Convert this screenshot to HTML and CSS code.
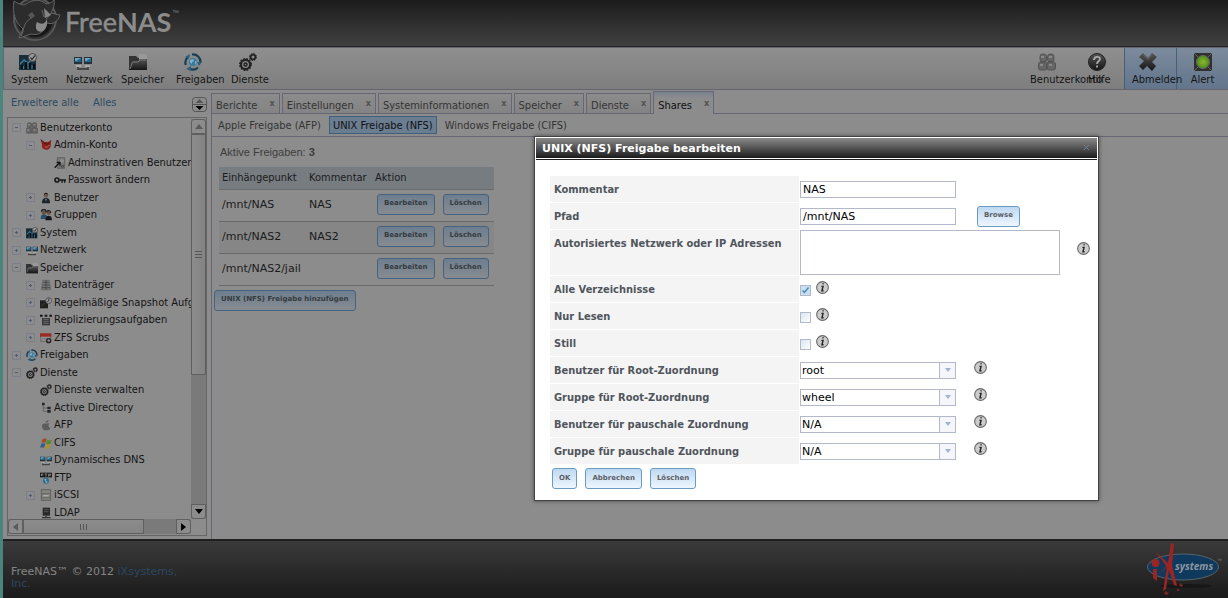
FILE: index.html
```html
<!DOCTYPE html>
<html lang="de">
<head>
<meta charset="utf-8">
<title>FreeNAS</title>
<link rel="stylesheet" href="styles.css">
</head>
<body>
<svg class="sprite" aria-hidden="true">
  <defs>
    <linearGradient id="dark" x1="0" y1="0" x2="0" y2="1"><stop offset="0" stop-color="#555"/><stop offset="1" stop-color="#151515"/></linearGradient>
    <radialGradient id="green"><stop offset="0" stop-color="#8fb52c"/><stop offset="1" stop-color="#4a8c1c"/></radialGradient>
  </defs>
  <symbol id="i-system" viewBox="0 0 18 18"><rect y="2" width="17" height="15" fill="#172f3b"/><path d="M1 10l4-4 4 3 3-3v2l-3 3-4-3-4 4z" fill="#3d7898"/><path d="M2 16v-4h2v4M6 16V9h2v7M10 16v-6h2v6M14 16v-5h2v5" fill="#080e12"/><path d="M4 16v-3h1v3M8.500 16v-5h1v5M12.500 16v-4h1v4" fill="#417d9c"/><circle cx="13.500" cy="4.500" r="4" fill="#999" stroke="#4c4c4c"/><path d="M11.500 4.500l1.500 2 3-4" fill="none" stroke="#222" stroke-width="1.200"/></symbol>
  <symbol id="i-net" viewBox="0 0 18 18"><path d="M0 4h8v7H0zM10 4h8v7h-8z" fill="#27313a"/><path d="M1 5h6v4H1zM11 5h6v4h-6z" fill="#1c6a91"/><path d="M1 5h6L2 8H1zM11 5h6l-5 3h-1z" fill="#75a3b8"/><path d="M2 12h5v2H2zM11 12h5v2h-5z" fill="#aaa"/><path d="M4 14v2h10v-2M7 16h4" fill="none" stroke="#444" stroke-width="1.800"/></symbol>
  <symbol id="i-folder" viewBox="0 0 18 18"><path d="M0 3h7l2 2h9v12H0z" fill="#333"/><path d="M10 1h6l2 2v5h-8z" fill="#999"/><path d="M0 17L3 8h6l2-2h7v11z" fill="url(#dark)"/><path d="M1 16L3.500 9H9l2-2h6" fill="none" stroke="#777"/></symbol>
  <symbol id="i-share" viewBox="0 0 18 18"><g fill="none" stroke="#173e55" stroke-width="2.200"><path d="M8 1.500a7.500 7.500 0 0 1 8.500 8"/><path d="M14 14.500a7.500 7.500 0 0 1-9 1"/><path d="M1.800 12A7.500 7.500 0 0 1 4 4"/></g><path d="M6 1L5 6 1 4zM18 9l-3 4-2-4zM7 13v5l-5-2z" fill="#2c5f7b"/><circle cx="9" cy="9" r="4" fill="#347ca0"/><path d="M6 7l3-1 1 2-2 1v2l-2-2zM11 8l2 1-2 3z" fill="#8ab2c3"/></symbol>
  <symbol id="i-gears" viewBox="0 0 18 18"><g fill="none" stroke="#222"><circle cx="6.500" cy="11.500" r="4.600" stroke-width="2.200"/><circle cx="6.500" cy="11.500" r="5.900" stroke-width="1.200" stroke-dasharray="1.700 1.390"/><circle cx="6.500" cy="11.500" r="1.500" stroke-width="1.500"/><circle cx="14" cy="4" r="2.400" stroke-width="1.800"/><circle cx="14" cy="4" r="3.500" stroke-dasharray="1.500 1.250"/></g></symbol>
  <symbol id="i-users" viewBox="0 0 18 18"><g fill="#666" stroke="#4c4c4c" stroke-width=".8"><rect x="2" y="1" width="6.500" height="8" rx="2.500"/><rect x="9.500" y="1" width="6.500" height="8" rx="2.500"/><rect x="0.500" y="9" width="8.500" height="8" rx="2"/><rect x="9" y="9" width="8.500" height="8" rx="2"/></g><path d="M3 3h3v2H3zM11 3h3v2h-3zM2 11h3v2H2zM11 11h3v2h-3z" fill="#8a8a8a"/></symbol>
  <symbol id="i-help" viewBox="0 0 18 18"><circle cx="9" cy="9" r="8.500" fill="url(#dark)" stroke="#222"/><path d="M6 7c0-4 6-4 6-1 0 2-3 2-3 5M9 12.500v2" fill="none" stroke="#aaa" stroke-width="1.800"/></symbol>
  <symbol id="i-x" viewBox="0 0 18 18"><path d="M4 0l5 5 4-5 5 4-5 5 4 4-4 5-5-5-4 4-4-4 5-5-5-4z" fill="url(#dark)"/><path d="M4 1.500l5 5 4-5" fill="none" stroke="#666"/></symbol>
  <symbol id="i-alert" viewBox="0 0 18 18"><rect width="18" height="18" fill="#303030"/><path d="M0 0l4 4M18 0l-4 4M0 18l4-4M18 18l-4-4" stroke="#666"/><circle cx="9" cy="9" r="6.500" fill="url(#green)" stroke="#656565"/></symbol>
  <symbol id="i-devil" viewBox="0 0 18 18"><path d="M1 2l5 3c2-1 4-1 6 0l5-4-1 6c1 6-3 9-7 9S2 13 3 8z" fill="#8d2018"/><path d="M1 1l5 4M6 6l4 2M11 8l3-3" stroke="#371310" stroke-width="1.500"/><path d="M7 12c3 1 5 0 7-3" fill="none" stroke="#b66" stroke-width="1.500"/></symbol>
  <symbol id="i-adminuser" viewBox="0 0 18 18"><path d="M5 1h11v16H5z" fill="#777" stroke="#555"/><circle cx="12" cy="6" r="3" fill="#8e8e8e"/><path d="M1 16l8-8M4 8h5v5" fill="none" stroke="#151515" stroke-width="2"/><path d="M10 12h5v4h-5z" fill="#555"/></symbol>
  <symbol id="i-key" viewBox="0 0 18 18"><circle cx="4.500" cy="9" r="3" fill="none" stroke="#1b1b1b" stroke-width="2.500"/><path d="M8 9h10M12 10v3M16 10v3" stroke="#1b1b1b" stroke-width="2.200"/></symbol>
  <symbol id="i-user" viewBox="0 0 18 18"><circle cx="9" cy="5" r="3.500" fill="#6b5b50"/><path d="M6 5c0-5 6-5 6 0l-1-2H8z" fill="#171717"/><path d="M3 17c0-6 2-8 6-8s6 2 6 8z" fill="#1b2027"/><path d="M8 10h2l-1 5z" fill="#aaa"/></symbol>
  <symbol id="i-group" viewBox="0 0 18 18"><circle cx="6" cy="5" r="3.500" fill="#685646"/><circle cx="13" cy="6" r="3" fill="#715545"/><path d="M2 4c1-5 7-4 7 0M10 5c1-4 6-3 6 1" stroke="#222" stroke-width="2" fill="none"/><path d="M1 15c0-5 2-7 5-7s5 2 5 7z" fill="#28506a"/><path d="M8 17c0-5 2-7 5-7s5 2 5 7z" fill="#15191d"/></symbol>
  <symbol id="i-disk" viewBox="0 0 18 18"><path d="M4 2h10l2 14H2z" fill="#777" stroke="#606060"/><path d="M5 5h8M4 9h10M3 13h12M9 2v14" stroke="#444" stroke-width="1.300"/></symbol>
  <symbol id="i-snap" viewBox="0 0 18 18"><path d="M0 5h12v12H0z" fill="#202020"/><path d="M2 14l5-5" stroke="#555"/><circle cx="13" cy="5.500" r="4.500" fill="#929292" stroke="#444"/><path d="M13 2v4l-2 1" fill="none" stroke="#222"/></symbol>
  <symbol id="i-repl" viewBox="0 0 18 18"><path d="M0 1h4v3H0zM7 1h4v3H7zM14 1h4v3h-4z" fill="#151515"/><path d="M3 6h12v11H3z" fill="#383838"/><path d="M5 8h8M5 11h8M5 14h8" stroke="#888"/></symbol>
  <symbol id="i-scrub" viewBox="0 0 18 18"><path d="M1 3h15v11H1z" fill="#929292" stroke="#555"/><path d="M0 2h17v5H0z" fill="#9e2a24"/><path d="M3 10h8" stroke="#666"/><circle cx="13" cy="13" r="3" fill="none" stroke="#222" stroke-width="2"/></symbol>
  <symbol id="i-ad" viewBox="0 0 18 18"><path d="M5 2v12h6M5 9h6" fill="none" stroke="#555"/><path d="M3 1h4v4H3zM11 7h5v4h-5zM11 12h5v4h-5z" fill="#252525"/></symbol>
  <symbol id="i-apple" viewBox="0 0 18 18"><path d="M8 6c1-3 3-4 5-4 0 2-2 4-5 4M14 7c-2-1-4 0-5 0-3-1-6 0-6 4 0 3 2 6 5 6h4c2 0 4-3 3-4-3-1-3-4-1-6" fill="#5d5d5d"/></symbol>
  <symbol id="i-win" viewBox="0 0 18 18"><path d="M4 3c2-1 4-1 6 0L8 9c-2-1-4-1-6 0z" fill="#a04c25"/><path d="M11 4c2 1 4 1 7 0l-2 6c-2 1-4 1-7 0z" fill="#5a8832"/><path d="M2 10c2-1 4-1 6 0l-2 6c-2-1-4-1-6 0z" fill="#315d91"/><path d="M9 11c2 1 4 1 7 0l-2 6c-2 1-4 1-7 0z" fill="#ac932d"/></symbol>
  <symbol id="i-ftp" viewBox="0 0 18 18"><path d="M0 1h18v7H0z" fill="#171717"/><path d="M2 6V3h3M2 4.500h3M7 3h4M9 3v4M13 7V3h3v2h-3" fill="none" stroke="#aaa"/><circle cx="9" cy="13" r="4.500" fill="#276b90"/><path d="M6 11l4-1-1 3 3 2-3 2-1-3z" fill="#8ca9b5"/></symbol>
  <symbol id="i-iscsi" viewBox="0 0 18 18"><path d="M2 1h14v16H2z" fill="#85857f" stroke="#4c4c4c"/><path d="M3 7h12M3 13h12" stroke="#555"/><path d="M5 10h8" stroke="#aaa" stroke-width="2"/></symbol>
  <symbol id="i-ldap" viewBox="0 0 18 18"><path d="M4 1h11v12H4z" fill="#292929"/><path d="M6 4h7M6 7h7" stroke="#666"/><path d="M9 13v3M3 16h13" stroke="#333" stroke-width="2"/></symbol>
  <symbol id="i-info" viewBox="0 0 12 12"><circle cx="6" cy="6" r="5.400" fill="#ccc" stroke="#666"/><path d="M6 2.500h1M5 5h1.500l-1 4H7" fill="none" stroke="#222" stroke-width="1.300"/></symbol>
</svg>

<div class="app">
  <header class="brand">
    <svg class="logo" viewBox="0 0 170 46" role="img" aria-label="FreeNAS">
      <circle cx="24" cy="19" r="21" fill="#303030" stroke="#575757" stroke-width="2"/>
      <circle cx="24" cy="19" r="18" fill="#171717"/>
      <path d="M3 1c5 3 9 5 12 3 7-5 15-5 20 0 5-1 7-2 8-5 1 6-1 10-3 14l9 2c-2 7-8 10-13 8-2 9-9 13-16 11L8 38l4-9C4 22 1 13 3 1z" fill="#2c2c2c" stroke="#666"/>
      <path d="M10 36c4-7 1-12 10-18M31 10l2 7 5-1M40 13c-2 3-2 4-5 6" fill="none" stroke="#666"/>
      <path d="M17 15l4-3 3 4-4 3z" fill="#555"/>
      <path d="M26 22c5 3 8 2 10-3 1 9-4 15-9 12-2-1-3-5-1-9z" fill="#8a8a8a"/><path d="M33 8l7 7-6 3z" fill="#858585"/>
      <text x="54" y="32" class="logo-word"><tspan>Free</tspan><tspan class="heavy">NAS</tspan></text>
      <text x="161" y="15" class="logo-tm">™</text>
    </svg>
  </header>
  <nav class="toolbar">
    <button><svg><use href="#i-system"/></svg>System</button>
    <button><svg><use href="#i-net"/></svg>Netzwerk</button>
    <button><svg><use href="#i-folder"/></svg>Speicher</button>
    <button><svg><use href="#i-share"/></svg>Freigaben</button>
    <button><svg><use href="#i-gears"/></svg>Dienste</button>
    <span class="spacer"></span>
    <button class="account"><svg><use href="#i-users"/></svg>Benutzerkonto</button>
    <button class="help"><svg><use href="#i-help"/></svg>Hilfe</button>
    <button class="hot logout"><svg><use href="#i-x"/></svg><span>Abmelden</span></button>
    <button class="hot"><svg><use href="#i-alert"/></svg>Alert</button>
  </nav>
  <div class="main">
    <aside class="side">
      <div class="side-head"><a href="#">Erweitere alle</a><a href="#">Alles</a>
        <svg class="updown" viewBox="0 0 15 15"><rect x=".5" y=".5" width="14" height="14" rx="3" fill="none" stroke="#555"/><path d="M0 7.500h15" stroke="#555"/><path d="M3.500 6L7.500 2l4 4z" fill="#555"/><path d="M3.500 9L7.500 13l4-4z" fill="#000"/></svg>
      </div>
      <div class="tree-box">
        <ul class="tree">
          <li class="l0"><i class="open"></i><svg><use href="#i-users"/></svg>Benutzerkonto</li>
          <li class="l1"><i class="open"></i><svg><use href="#i-devil"/></svg>Admin-Konto</li>
          <li class="l2"><i class="leaf"></i><svg><use href="#i-adminuser"/></svg>Adminstrativen Benutzer</li>
          <li class="l2"><i class="leaf"></i><svg><use href="#i-key"/></svg>Passwort ändern</li>
          <li class="l1"><i></i><svg><use href="#i-user"/></svg>Benutzer</li>
          <li class="l1"><i></i><svg><use href="#i-group"/></svg>Gruppen</li>
          <li class="l0"><i></i><svg><use href="#i-system"/></svg>System</li>
          <li class="l0"><i></i><svg><use href="#i-net"/></svg>Netzwerk</li>
          <li class="l0"><i class="open"></i><svg><use href="#i-folder"/></svg>Speicher</li>
          <li class="l1"><i></i><svg><use href="#i-disk"/></svg>Datenträger</li>
          <li class="l1"><i></i><svg><use href="#i-snap"/></svg>Regelmäßige Snapshot Aufgaben</li>
          <li class="l1"><i></i><svg><use href="#i-repl"/></svg>Replizierungsaufgaben</li>
          <li class="l1"><i></i><svg><use href="#i-scrub"/></svg>ZFS Scrubs</li>
          <li class="l0"><i></i><svg><use href="#i-share"/></svg>Freigaben</li>
          <li class="l0"><i class="open"></i><svg><use href="#i-gears"/></svg>Dienste</li>
          <li class="l1"><i class="leaf"></i><svg><use href="#i-gears"/></svg>Dienste verwalten</li>
          <li class="l1"><i class="leaf"></i><svg><use href="#i-ad"/></svg>Active Directory</li>
          <li class="l1"><i class="leaf"></i><svg><use href="#i-apple"/></svg>AFP</li>
          <li class="l1"><i class="leaf"></i><svg><use href="#i-win"/></svg>CIFS</li>
          <li class="l1"><i class="leaf"></i><svg><use href="#i-net"/></svg>Dynamisches DNS</li>
          <li class="l1"><i class="leaf"></i><svg><use href="#i-ftp"/></svg>FTP</li>
          <li class="l1"><i></i><svg><use href="#i-iscsi"/></svg>iSCSI</li>
          <li class="l1"><i class="leaf"></i><svg><use href="#i-ldap"/></svg>LDAP</li>
        </ul>
        <div class="vbar">
          <span class="cap up"><svg viewBox="0 0 8 5"><path d="M0 5l4-5 4 5z" fill="#5a5a5a"/></svg></span>
          <span class="thumb"><svg viewBox="0 0 7 8"><path d="M0 .5h7M0 3.500h7M0 6.500h7" stroke="#555"/></svg></span>
          <span class="track"></span>
          <span class="cap down"><svg viewBox="0 0 8 5"><path d="M0 0l4 5 4-5z" fill="#000"/></svg></span>
        </div>
        <div class="hbar">
          <span class="cap left"><svg viewBox="0 0 5 8"><path d="M5 0L0 4l5 4z" fill="#5a5a5a"/></svg></span>
          <span class="thumb"><svg viewBox="0 0 8 6"><path d="M.5 0v6M3.500 0v6M6.500 0v6" stroke="#555"/></svg></span>
          <span class="track"></span>
          <span class="cap right"><svg viewBox="0 0 5 8"><path d="M0 0l5 4-5 4z" fill="#000"/></svg></span>
        </div>
      </div>
    </aside>
    <section class="content">
      <div class="tabs">
        <button>Berichte<b>x</b></button><button>Einstellungen<b>x</b></button><button>Systeminformationen<b>x</b></button><button>Speicher<b>x</b></button><button>Dienste<b>x</b></button><button class="on">Shares<b>x</b></button>
      </div>
      <div class="subtabs"><button>Apple Freigabe (AFP)</button><button class="on">UNIX Freigabe (NFS)</button><button>Windows Freigabe (CIFS)</button></div>
      <div class="pane">
        <p class="count">Aktive Freigaben: <strong>3</strong></p>
        <table class="shares">
          <thead><tr><th class="c1">Einhängepunkt</th><th class="c2">Kommentar</th><th>Aktion</th></tr></thead>
          <tbody>
            <tr><td>/mnt/NAS</td><td>NAS</td><td><div class="acts"><button class="btn">Bearbeiten</button><button class="btn">Löschen</button></div></td></tr>
            <tr class="alt"><td>/mnt/NAS2</td><td>NAS2</td><td><div class="acts"><button class="btn">Bearbeiten</button><button class="btn">Löschen</button></div></td></tr>
            <tr><td>/mnt/NAS2/jail</td><td></td><td><div class="acts"><button class="btn">Bearbeiten</button><button class="btn">Löschen</button></div></td></tr>
          </tbody>
        </table>
        <button class="btn">UNIX (NFS) Freigabe hinzufügen</button>
      </div>
    </section>
  </div>
  <footer class="foot">
    <p>FreeNAS™ © 2012 <a href="#">iXsystems, Inc.</a></p>
    <svg class="ix" viewBox="0 0 76 54" role="img" aria-label="iXsystems">
      <ellipse cx="40" cy="43" rx="26" ry="2" fill="#171717"/>
      <ellipse cx="37" cy="24" rx="35.500" ry="13" fill="#0f3a5e" stroke="#59636b"/>
      <path d="M25 0l3 1-2 21 5 21-3-1-5-15-3 19-3 2 4-24L9 8l13 12z" fill="#9b2523"/>
      <path d="M30 12L13 31l10-9zM7 26l4 0v12l-4-3z" fill="#9b2523"/><circle cx="9.500" cy="20" r="4" fill="#9b2523"/><path d="M34 40l3 2-1 2-3-1zM19 48l4 2-2 2-3-1zM31 46h2v2h-2z" fill="#7b2523"/>
      <text x="29" y="27" class="ix-word">systems</text><text x="71" y="19" class="ix-tm">™</text>
    </svg>
  </footer>

  <form class="dialog" role="dialog" aria-labelledby="dlg-title">
    <div class="dlg-title"><h1 id="dlg-title">UNIX (NFS) Freigabe bearbeiten</h1><button type="button" class="close" aria-label="Schließen"><svg viewBox="0 0 7 7"><path d="M1 1l5 5M6 1L1 6" stroke="#6a7f9b" stroke-width="1"/></svg></button></div>
    <div class="dlg-body">
      <div class="row"><label for="kom">Kommentar</label><div class="field"><input type="text" id="kom" value="NAS"></div></div>
      <div class="row"><label for="pfad">Pfad</label><div class="field"><input type="text" id="pfad" value="/mnt/NAS"><button type="button" class="btn lit browse">Browse</button></div></div>
      <div class="row tall"><label for="net">Autorisiertes Netzwerk oder IP Adressen</label><div class="field"><textarea id="net"></textarea><svg class="info"><use href="#i-info"/></svg></div></div>
      <div class="row check"><label for="alle">Alle Verzeichnisse</label><div class="field"><input type="checkbox" id="alle" checked><svg class="info"><use href="#i-info"/></svg></div></div>
      <div class="row check"><label for="lesen">Nur Lesen</label><div class="field"><input type="checkbox" id="lesen"><svg class="info"><use href="#i-info"/></svg></div></div>
      <div class="row check"><label for="still">Still</label><div class="field"><input type="checkbox" id="still"><svg class="info"><use href="#i-info"/></svg></div></div>
      <div class="row pick"><label for="ur">Benutzer für Root-Zuordnung</label><div class="field"><span class="combo"><select id="ur"><option>root</option></select></span><svg class="info"><use href="#i-info"/></svg></div></div>
      <div class="row pick"><label for="gr">Gruppe für Root-Zuordnung</label><div class="field"><span class="combo"><select id="gr"><option>wheel</option></select></span><svg class="info"><use href="#i-info"/></svg></div></div>
      <div class="row pick"><label for="up">Benutzer für pauschale Zuordnung</label><div class="field"><span class="combo"><select id="up"><option>N/A</option></select></span><svg class="info"><use href="#i-info"/></svg></div></div>
      <div class="row pick"><label for="gp">Gruppe für pauschale Zuordnung</label><div class="field"><span class="combo"><select id="gp"><option>N/A</option></select></span><svg class="info"><use href="#i-info"/></svg></div></div>
      <div class="dlg-actions"><button type="button" class="btn lit">OK</button><button type="button" class="btn lit">Abbrechen</button><button type="button" class="btn lit">Löschen</button></div>
    </div>
  </form>
</div>
</body>
</html>
```
FILE: styles.css
```css
* { box-sizing: border-box; }
body { margin: 0; background: #8c8c8c; color: #141414; font: 11px/14px "DejaVu Sans", Verdana, sans-serif; }
button, input, select, textarea { font: inherit; color: inherit; margin: 0; }
button { border: 0; background: none; padding: 0; white-space: nowrap; }
a { color: #2c4a63; text-decoration: none; }
svg { display: block; flex: none; }
.sprite { position: absolute; width: 0; height: 0; }
.toolbar, .side, .tabs, .subtabs, .shares th, .row label { font-family: "DejaVu Sans Condensed", "DejaVu Sans", Verdana, sans-serif; }

.app { position: relative; display: flex; flex-direction: column; min-height: 100vh; border-left: 3px solid #4a857d; }
.brand { height: 47px; background: linear-gradient(#1c1c1c, #404040); border-bottom: 1px solid #232323; padding-left: 8px; }
.logo { width: 170px; height: 46px; }
.logo-word { font: 27px Lato, sans-serif; fill: #8c8c8c; stroke: #8c8c8c; stroke-width: 0.5px; }
.heavy { font-weight: 700; stroke: none; }
.logo-tm { font: 7px "Liberation Sans", sans-serif; fill: #777; }

.toolbar { display: flex; height: 43px; background: linear-gradient(#8f8f8f, #7e7e7e); border: 1px solid #656570; border-right: 0; padding-left: 7px; }
.toolbar button { display: flex; flex-direction: column; gap: 2px; align-items: flex-start; width: 55px; padding-top: 5px; }
.toolbar svg { width: 18px; height: 18px; margin-left: 8px; }
.toolbar .spacer { flex: 1; }
.toolbar .account { width: 58px; }
.toolbar .help { width: 36px; }
.toolbar .help svg { margin-left: 0; }
.toolbar .hot { width: 52px; padding-left: 7px; border-left: 1px solid #465e78; background: linear-gradient(#7c8b9c, #62758c); }
.toolbar .logout { z-index: 1; }
.toolbar .hot svg { margin-left: 7px; }
.toolbar .hot:last-child { align-items: center; padding-left: 0; }
.toolbar .hot:last-child svg { margin-left: 0; }

.main { flex: 1; display: flex; min-height: 0; }
.side { width: 204px; padding: 5px 0 3px 4px; display: flex; flex-direction: column; }
.side-head { display: flex; gap: 14px; padding: 1px 0 0 4px; height: 22px; }
.side-head .updown { width: 15px; height: 15px; margin: 1px 0 0 auto; }
.tree-box { flex: 1; display: grid; grid-template: minmax(0, 1fr) 15px / minmax(0, 1fr) 15px; border: 1px solid #666; padding: 1px 0; }
.tree { list-style: none; margin: 0; padding: 0; overflow: hidden; max-height: 400px; }
.tree li { display: flex; align-items: center; height: 17px; white-space: nowrap; gap: 2px; }
.tree li:nth-child(even) { height: 18px; }
.tree svg { width: 12px; height: 12px; }
.tree i { flex: none; width: 9px; height: 9px; margin-right: 3px; border: 1px solid #7b7f8b; background: linear-gradient(#4c5a75, #4c5a75) center / 3px 1px no-repeat, linear-gradient(#4c5a75, #4c5a75) center / 1px 3px no-repeat; }
.tree i.open { background: linear-gradient(#4c5a75, #4c5a75) center / 3px 1px no-repeat; }
.tree i.leaf { visibility: hidden; }
.l0 { padding-left: 4px; }
.l1 { padding-left: 18px; }
.l2 { padding-left: 32px; }
.vbar { display: flex; flex-direction: column; background: #7a7a7a; }
.hbar { display: flex; background: #7a7a7a; }
.cap, .thumb { display: flex; align-items: center; justify-content: center; border: 1px solid #5f5f5f; background: #8c8c8c; }
.cap { flex: 0 0 15px; }
.up svg, .down svg { width: 8px; height: 5px; }
.left svg, .right svg { width: 5px; height: 8px; }
.up { border-radius: 3px 3px 0 0; }
.down { border-radius: 0 0 3px 3px; }
.left { border-radius: 3px 0 0 3px; }
.right { border-radius: 0 3px 3px 0; }
.vbar .thumb { flex: 65; background: linear-gradient(90deg, #8c8c8c, #838383); }
.vbar .track { flex: 35; }
.vbar .thumb svg { width: 7px; height: 8px; }
.hbar .thumb { flex: 79; background: linear-gradient(#8c8c8c, #838383); }
.hbar .track { flex: 21; }
.hbar .thumb svg { width: 8px; height: 6px; }

.content { flex: 1; min-width: 0; margin-left: 4px; color: #343434; }
.tabs { display: flex; align-items: flex-end; gap: 2px; height: 24px; border-bottom: 1px solid #666674; }
.tabs button { display: flex; height: 20px; padding: 5px 4px 0 4px; border: 1px solid #666674; border-bottom: 0; gap: 12px; background: linear-gradient(#8c8c8c, #838383); }
.tabs b { font-size: 9px; line-height: 9px; color: #525252; }
.tabs .on { height: 23px; padding-top: 7px; margin-bottom: -1px; background: linear-gradient(#78828e, #8c8c8c 6px); color: #111; }
.subtabs { display: flex; align-items: center; gap: 4px; height: 23px; padding-left: 2px; border-left: 1px solid #666674; border-bottom: 1px solid #666674; }
.subtabs button { height: 18px; padding: 1px 3px 0; border: 1px solid transparent; line-height: 15px; }
.subtabs .on { border-color: #3f5f7d; background: #6b7d91; color: #111; }
.pane { height: calc(100% - 47px); padding: 8px 0 0 2px; border-left: 1px solid #666674; }
.count { margin: 0 0 8px 6px; font: 11px/14px "Liberation Sans", Arial, sans-serif; color: #3c3c3c; }
.shares { width: 275px; margin: 0 0 4px 5px; border-collapse: collapse; table-layout: fixed; color: #1b1b1b; }
.shares th { height: 22px; font-weight: 400; text-align: left; background: #777c81; }
.shares th, .shares td { padding: 0 3px; border-bottom: 1px solid #6a6a6a; white-space: nowrap; }
.shares td { height: 32px; }
.shares td:last-child { padding-bottom: 2px; }
.shares .alt { background: #868686; }
.c1 { width: 87px; }
.c2 { width: 66px; }
.acts { display: flex; gap: 8px; padding-left: 2px; }
.btn { height: 21px; padding: 0 6px 2px; border: 1px solid #456380; border-radius: 3px; background: linear-gradient(#6e7e8f, #868b90); color: #363b40; font-size: 7px; font-weight: 700; }
.btn.lit { border-color: #6c9bc2; background: linear-gradient(#bfd9f1, #eef6ff); color: #5b6067; }

.foot { display: flex; justify-content: space-between; height: 60px; padding: 0 6px 0 8px; border-top: 2px solid #202020; background: linear-gradient(#3a3a3a, #1a1a1a); color: #858585; }
.foot p { width: 175px; margin: 25px 0 0; line-height: 12px; }
.foot a { color: #2a4762; }
.ix { width: 76px; height: 54px; margin-top: 2px; }
.ix-word { font: italic 700 10px "Noto Sans", sans-serif; fill: #8b959d; }
.ix-tm { font: 5px "Liberation Sans", sans-serif; fill: #777; }

.dialog { position: absolute; left: 531px; top: 136px; width: 565px; padding-bottom: 11px; border: 1px solid #303030; outline: 1px solid #444; outline-offset: -1px; background: #fff; box-shadow: 0 0 4px #444; }
.dlg-title { display: flex; align-items: center; height: 22px; margin: 1px; margin-bottom: 16px; padding: 0 7px 0 6px; background: linear-gradient(#8b8b8b, #1b1b1b 20px, #fff 20px, #fff 21px, #202020 21px); color: #fff; }
.dlg-title h1 { flex: 1; margin: 0; font-size: 11px; line-height: 20px; }
.close { margin-bottom: 4px; }
.close svg { width: 7px; height: 7px; }
.dlg-body { padding: 0 14px 0 15px; color: #000; }
.row { display: flex; gap: 1px; min-height: 26px; margin-bottom: 1px; }
.row label { flex: 0 0 249px; padding: 7px 4px 5px; background: #f4f4f4; color: #50555c; font-weight: 700; white-space: nowrap; }
.field { flex: 1; display: flex; align-items: center; }
.field input[type=text] { width: 156px; height: 17px; padding: 0 2px; border: 1px solid #b3b9cb; background: #fff; }
.browse { margin-left: 21px; }
.tall { min-height: 45px; }
.tall textarea { width: 260px; height: 45px; border: 1px solid #b3b9cb; resize: none; }
.info { width: 13px; height: 13px; }
.tall .info { margin: 0 0 8px 17px; }
.check .field { align-items: flex-start; gap: 5px; padding-top: 5px; }
.check input { appearance: none; width: 11px; height: 11px; margin-top: 4px; border: 1px solid #b3b9cb; background: linear-gradient(135deg, #d9e5f0, #fff); }
.check input:checked { background: url("data:image/svg+xml,%3Csvg xmlns='http://www.w3.org/2000/svg' viewBox='0 0 9 9'%3E%3Crect width='9' height='9' fill='%23c6e0f2'/%3E%3Cpath d='M1.500 4.500l2 2 4-5' fill='none' stroke='%23498bb5' stroke-width='1.500'/%3E%3C/svg%3E"); }
.combo { position: relative; width: 156px; height: 17px; }
.combo select { display: block; appearance: none; width: 100%; height: 17px; padding: 0 1px; border: 1px solid #b3b9cb; border-radius: 0; background: #fff; line-height: 15px; }
.combo::after { content: ""; position: absolute; inset: 1px 1px 1px auto; width: 15px; border-left: 1px solid #b3b9cb; background: url("data:image/svg+xml,%3Csvg xmlns='http://www.w3.org/2000/svg' viewBox='0 0 6 4'%3E%3Cpath d='M0 0h6L3 4z' fill='%239fb3d4'/%3E%3C/svg%3E") center / 6px 4px no-repeat, #f5f6fa; pointer-events: none; }
.pick .info { margin: 0 0 6px 18px; }
.dlg-actions { display: flex; gap: 8px; padding: 3px 0 0 2px; }
```
